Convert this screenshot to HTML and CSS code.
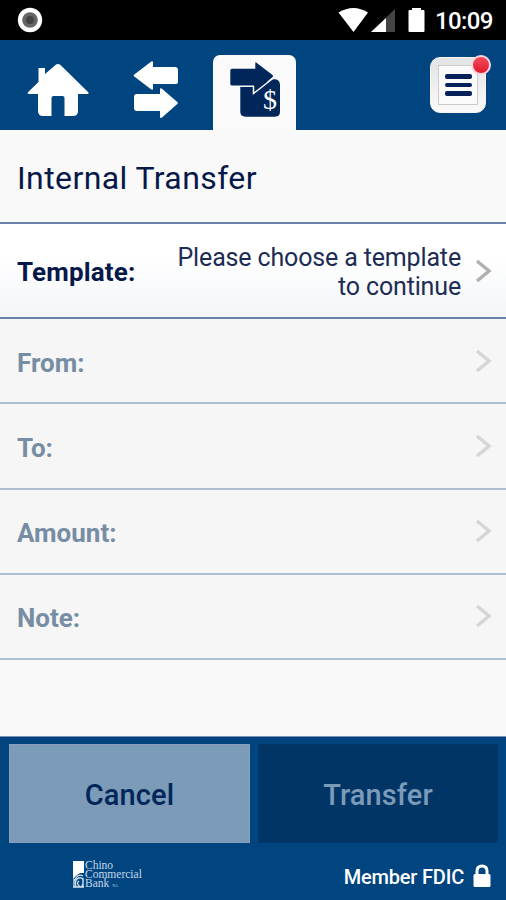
FILE: index.html
```html
<!DOCTYPE html>
<html lang="en">
<head>
<meta charset="utf-8">
<title>Internal Transfer</title>
<link rel="stylesheet" href="styles.css">
</head>
<body>
<div class="screen">
  <div class="status">
    <svg class="status-dot" width="26" height="26" viewBox="0 0 26 26"><circle cx="13" cy="13" r="12.2" fill="#fff"/><circle cx="13" cy="13" r="7.8" fill="#666"/><circle cx="13" cy="13" r="4" fill="#444"/></svg>
    <svg class="status-icons" width="90" height="28" viewBox="0 0 90 28">
      <path d="M.5 6.500Q15.500-2.500 30 6.500L15.500 26Z" fill="#fff"/>
      <path d="M57 3V26H33Z" fill="#444"/><path d="M48 12V26H33Z" fill="#fff"/>
      <path d="M74 2h9v2h2.500q1 0 1 1v20q0 1-1 1h-14q-1 0-1-1V5q0-1 1-1H74Z" fill="#fff"/>
    </svg>
    <span class="clock">10:09</span>
  </div>
  <nav class="nav">
    <svg class="home" width="62" height="54" viewBox="0 0 62 54"><path d="M11.500 5h6.500v6L28.500 2q2.500-2 5 0L61 29q1.500 2-.500 2H51v17q0 5-5 5h-8.500V35q0-2-2-2h-9q-2 0-2 2v18H16q-5 0-5-5V31H2.500q-3 0-1.300-2L11.500 19Z" fill="#fff"/></svg>
    <svg class="swap" width="46" height="58" viewBox="0 0 46 58"><path d="M1.300 13.500 18 .7q2-1.200 2 1V6h22q3 0 3 3v12q0 2-2 2H20v4.500q0 2-2 .8L1.300 15.500q-1.300-1 0-2ZM4 33h23v-4.500q0-2 2-.8l15 13.100q1.500 1.200 0 2.500L29 56.500q-2 1.300-2-.8V50H4q-3 0-3-3V36q0-3 3-3Z" fill="#fff"/></svg>
    <div class="tab">
      <svg width="54" height="56" viewBox="0 0 54 56">
        <path d="M11.300 20H38L43 17.300H46Q51 18 51 23V49.500Q51 54.700 46 54.700H16.500Q11.300 54.700 11.300 49.500Z" fill="#00265a"/>
        <path d="M3 6.700H26.300V1Q26.300-.2 27.500.7L43.500 13Q44.500 14 43.500 15L26.300 30V23.500H3Q1.300 23.500 1.300 22V8.500Q1.300 6.700 3 6.700Z" fill="#00265a"/>
        <path d="M11 24.200H24.500V31.500L44.500 16" fill="none" stroke="#fafafa" stroke-width="1.500"/>
        <text x="41" y="46.500" text-anchor="middle" class="dollar">$</text>
      </svg>
    </div>
    <div class="menu">
      <div class="menu-face"><i></i><i></i><i></i></div>
      <span class="alert"></span>
    </div>
  </nav>
  <h1 class="title"><span>Internal Transfer</span></h1>
  <div class="row active">
    <span class="label">Template:</span>
    <span class="value"><span>Please choose a template</span><br><span>to continue</span></span>
    <svg class="chev" width="17" height="26" viewBox="0 0 17 26"><path d="M2 3 14 13 2 23"/></svg>
  </div>
  <div class="row"><span class="label">From:</span><svg class="chev" width="17" height="26" viewBox="0 0 17 26"><path d="M2 3 14 13 2 23"/></svg></div>
  <div class="row"><span class="label">To:</span><svg class="chev" width="17" height="26" viewBox="0 0 17 26"><path d="M2 3 14 13 2 23"/></svg></div>
  <div class="row"><span class="label">Amount:</span><svg class="chev" width="17" height="26" viewBox="0 0 17 26"><path d="M2 3 14 13 2 23"/></svg></div>
  <div class="row"><span class="label">Note:</span><svg class="chev" width="17" height="26" viewBox="0 0 17 26"><path d="M2 3 14 13 2 23"/></svg></div>
  <footer class="footer">
    <div class="buttons">
      <button class="btn cancel">Cancel</button>
      <button class="btn transfer">Transfer</button>
    </div>
    <div class="legal">
      <svg class="mark" width="12" height="28" viewBox="0 0 12 28"><path d="M0 0h11v12H7L3 15 0 18Z" fill="#fff"/><path d="M1 20q4-8 9-5M3 26q-2-8 3-9t4 5-4 3 0-5M0 26h11M1 18v8M10 17v9" fill="none" stroke="#d5e2ee" stroke-width="1.300"/></svg>
      <div class="bank"><span>Chino</span><span>Commercial</span><span>Bank <small>NA</small></span></div>
      <span class="fdic">Member FDIC</span>
      <svg class="lock" width="18" height="24" viewBox="0 0 18 24"><path d="M4 11V7Q4 2 9 2t5 5v4" fill="none" stroke="#fff" stroke-width="3"/><rect x="0.500" y="10" width="17" height="13" rx="1.500" fill="#fff"/></svg>
    </div>
  </footer>
</div>
</body>
</html>
```
FILE: styles.css
```css
* { box-sizing: border-box; }
body { margin: 0; font-family: Roboto, "Liberation Sans", sans-serif; }
.screen { width: 506px; height: 900px; display: flex; flex-direction: column; background: #f9f9f9; overflow: hidden; }
svg { display: block; flex: none; }
.status { height: 40px; background: #000; display: flex; align-items: flex-start; flex: none; }
.status-dot { margin: 7px 0 0 17px; }
.status-icons { margin: 6px 0 0 295px; }
.clock { margin: 6px 0 0 7px; font-size: 24px; line-height: 30px; font-weight: 500; color: #fff; letter-spacing: -.6px; }
.nav { height: 90px; background: #004580; display: flex; align-items: flex-start; flex: none; }
.home { margin: 23px 0 0 27px; }
.swap { margin: 21px 0 0 44px; }
.tab { width: 83px; height: 75px; margin: 15px 0 0 34px; padding: 7px 0 0 16px; background: #fafafa; border-radius: 7px 7px 0 0; }
.dollar { font-family: "Liberation Serif", serif; font-size: 28px; fill: #fff; }
.menu { width: 56px; height: 56px; margin: 17px 0 0 134px; padding: 7px; position: relative; background: linear-gradient(#e2e3e5, #fafafa); border: 1px solid #f5f5f5; border-radius: 10px; }
.menu-face { height: 40px; background: #fafafa; border: 1px solid #ccc; display: flex; flex-direction: column; justify-content: center; align-items: center; gap: 4px; }
.menu-face i { width: 27px; height: 4.500px; border-radius: 2px; background: #06205a; }
.alert { position: absolute; right: -6px; top: -3px; width: 20px; height: 20px; border: 2px solid #f5d5dc; border-radius: 50%; background: linear-gradient(#f34a5b, #e31b2e); }
.title { margin: 0; height: 94px; flex: none; padding: 29px 17px 0; border-bottom: 2px solid #6b80a8; color: #061848; font-size: 32px; line-height: 38px; font-weight: 400; letter-spacing: .4px; }
.row { height: 85.250px; flex: none; display: flex; align-items: center; justify-content: space-between; padding: 0 14px 0 17px; background: #f6f6f6; border-bottom: 2px solid #afc0d2; color: #778da4; }
.label { font-size: 26px; line-height: 30px; font-weight: 700; padding-top: 4px; }
.row.active { height: 95px; background: linear-gradient(#fff 35%, #f3f5f8); border-bottom-color: #6b80a8; color: #061848; }
.active .label { padding-top: 3px; letter-spacing: .15px; }
.value { margin-left: auto; margin-right: 14px; padding-top: 3px; text-align: right; font-size: 25px; line-height: 29px; letter-spacing: -.15px; color: #1d2c55; }
.chev { fill: none; stroke: #d6d6d6; stroke-width: 3.500; }
.active .chev { stroke: #b1b1b1; }
.footer { margin-top: auto; height: 164px; flex: none; padding: 7px 8px 0 9px; background: #004580; border-top: 1px solid #7894b4; }
.buttons { display: grid; grid-template-columns: 241px 240px; gap: 8px; }
.btn { height: 99px; padding: 2px 0 0; border: 1px solid #8ba0b8; font: 500 29px/36px Roboto, sans-serif; letter-spacing: .1px; }
.cancel { background: #7c9bb9; color: #00265a; }
.transfer { background: #003565; border-color: #063765; color: #7c9bb9; }
.legal { display: flex; align-items: flex-start; padding: 18px 7px 0 64px; }
.bank { width: 90px; display: flex; flex-direction: column; font-family: "Liberation Serif", serif; font-size: 11.500px; line-height: 9px; color: #c5d8ea; }
.bank small { font-size: 4px; }
.fdic { margin-left: auto; margin-top: 4px; font-size: 20px; line-height: 24px; color: #fff; font-weight: 500; letter-spacing: -.2px; }
.lock { margin: 3px 0 0 9px; }
```
